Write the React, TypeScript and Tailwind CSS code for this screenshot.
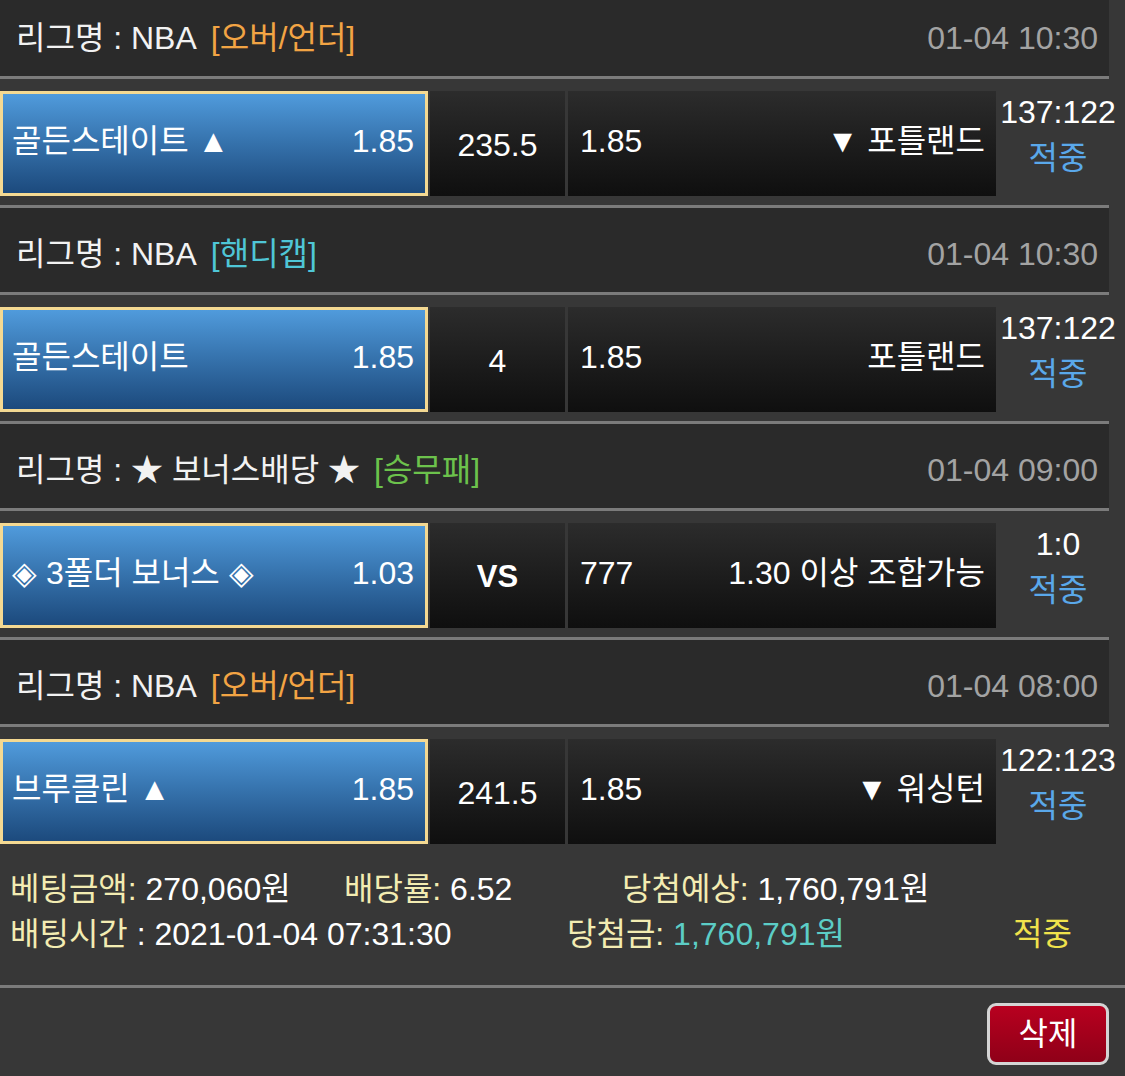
import React from 'react';

type Game = {
  league: string;
  type: string;
  typeColor: string;
  time: string;
  home: string;
  homeOdds: string;
  mid: string;
  midBold?: boolean;
  awayOdds: string;
  away: string;
  score: string;
};

const games: Game[] = [
  {
    league: 'NBA',
    type: '[오버/언더]',
    typeColor: 'text-[#f2a444]',
    time: '01-04 10:30',
    home: '골든스테이트 ▲',
    homeOdds: '1.85',
    mid: '235.5',
    awayOdds: '1.85',
    away: '▼ 포틀랜드',
    score: '137:122',
  },
  {
    league: 'NBA',
    type: '[핸디캡]',
    typeColor: 'text-[#4fc6d6]',
    time: '01-04 10:30',
    home: '골든스테이트',
    homeOdds: '1.85',
    mid: '4',
    awayOdds: '1.85',
    away: '포틀랜드',
    score: '137:122',
  },
  {
    league: '★ 보너스배당 ★',
    type: '[승무패]',
    typeColor: 'text-[#6cc24c]',
    time: '01-04 09:00',
    home: '◈ 3폴더 보너스 ◈',
    homeOdds: '1.03',
    mid: 'VS',
    midBold: true,
    awayOdds: '777',
    away: '1.30 이상 조합가능',
    score: '1:0',
  },
  {
    league: 'NBA',
    type: '[오버/언더]',
    typeColor: 'text-[#f2a444]',
    time: '01-04 08:00',
    home: '브루클린 ▲',
    homeOdds: '1.85',
    mid: '241.5',
    awayOdds: '1.85',
    away: '▼ 워싱턴',
    score: '122:123',
  },
];

function GameBlock({ game, last }: { game: Game; last: boolean }) {
  return (
    <div>
      {/* League header */}
      <div className="flex h-[84px] w-[1109px] items-center justify-between bg-[#2a2a2a] pl-[16px] pr-[11px] pt-[7px]">
        <div className="flex items-center gap-[14px] text-[#f2f2f2]">
          <span>리그명 : {game.league}</span>
          <span className={game.typeColor}>{game.type}</span>
        </div>
        <span className="text-[#a3a3a3]">{game.time}</span>
      </div>
      <div className="h-[3px] w-[1109px] bg-[#7b7b7b]" />
      {/* Bet row */}
      <div className="flex pb-[9px] pt-[12px]">
        <div className="flex h-[105px] w-[428px] items-center justify-between border-[3px] border-[#f4d992] bg-gradient-to-b from-[#509bdc] to-[#1c4a7d] pb-[6px] pl-[9px] pr-[11px] text-white">
          <span>{game.home}</span>
          <span>{game.homeOdds}</span>
        </div>
        <div
          className={`ml-[2px] flex h-[105px] w-[135px] items-center justify-center bg-gradient-to-b from-[#2c2c2c] to-[#0f0f0f] pt-[2px] text-white ${
            game.midBold ? 'text-[31px] font-bold' : ''
          }`}
        >
          {game.mid}
        </div>
        <div className="ml-[3px] flex h-[105px] w-[428px] items-center justify-between bg-gradient-to-b from-[#2c2c2c] to-[#0f0f0f] pb-[6px] pl-[12px] pr-[11px] text-white">
          <span>{game.awayOdds}</span>
          <span>{game.away}</span>
        </div>
        <div className="-mt-[2px] flex w-[124px] flex-col items-center leading-[46px]">
          <span className="text-white">{game.score}</span>
          <span className="text-[#5aa8ea]">적중</span>
        </div>
      </div>
      {!last && <div className="h-[3px] w-[1109px] bg-[#7b7b7b]" />}
    </div>
  );
}

export default function App() {
  return (
    <div className="h-[1076px] w-[1125px] overflow-hidden bg-[#373737] font-['Liberation_Sans','Noto_Sans_CJK_KR',sans-serif] text-[32px] leading-none">
      <div className="-mt-[8px]">
        {games.map((g, i) => (
          <GameBlock key={i} game={g} last={i === games.length - 1} />
        ))}

        {/* Summary */}
        <div className="pb-[28px] pt-[14px] leading-[45px]">
          <div className="flex">
            <div className="w-[344px] pl-[10px]">
              <span className="text-[#f3ecb2]">베팅금액:</span>
              <span className="text-white"> 270,060원</span>
            </div>
            <div className="w-[278px]">
              <span className="text-[#f3ecb2]">배당률:</span>
              <span className="text-white"> 6.52</span>
            </div>
            <div>
              <span className="text-[#f3ecb2]">당첨예상:</span>
              <span className="text-white"> 1,760,791원</span>
            </div>
          </div>
          <div className="flex">
            <div className="w-[567px] pl-[10px]">
              <span className="text-[#f3ecb2]">배팅시간</span>
              <span className="text-white"> : 2021-01-04 07:31:30</span>
            </div>
            <div className="w-[446px]">
              <span className="text-[#f3ecb2]">당첨금:</span>
              <span className="text-[#5ccdc6]"> 1,760,791원</span>
            </div>
            <span className="text-[#f0e24c]">적중</span>
          </div>
        </div>
        <div className="h-[3px] w-full bg-[#7b7b7b]" />

        <div className="flex justify-end pr-[16px] pt-[15px]">
          <button className="flex h-[62px] w-[122px] items-center justify-center rounded-[9px] border-[3px] border-[#d4d4d4] bg-gradient-to-b from-[#b8001f] to-[#8f0018] text-white">
            삭제
          </button>
        </div>
      </div>
    </div>
  );
}
